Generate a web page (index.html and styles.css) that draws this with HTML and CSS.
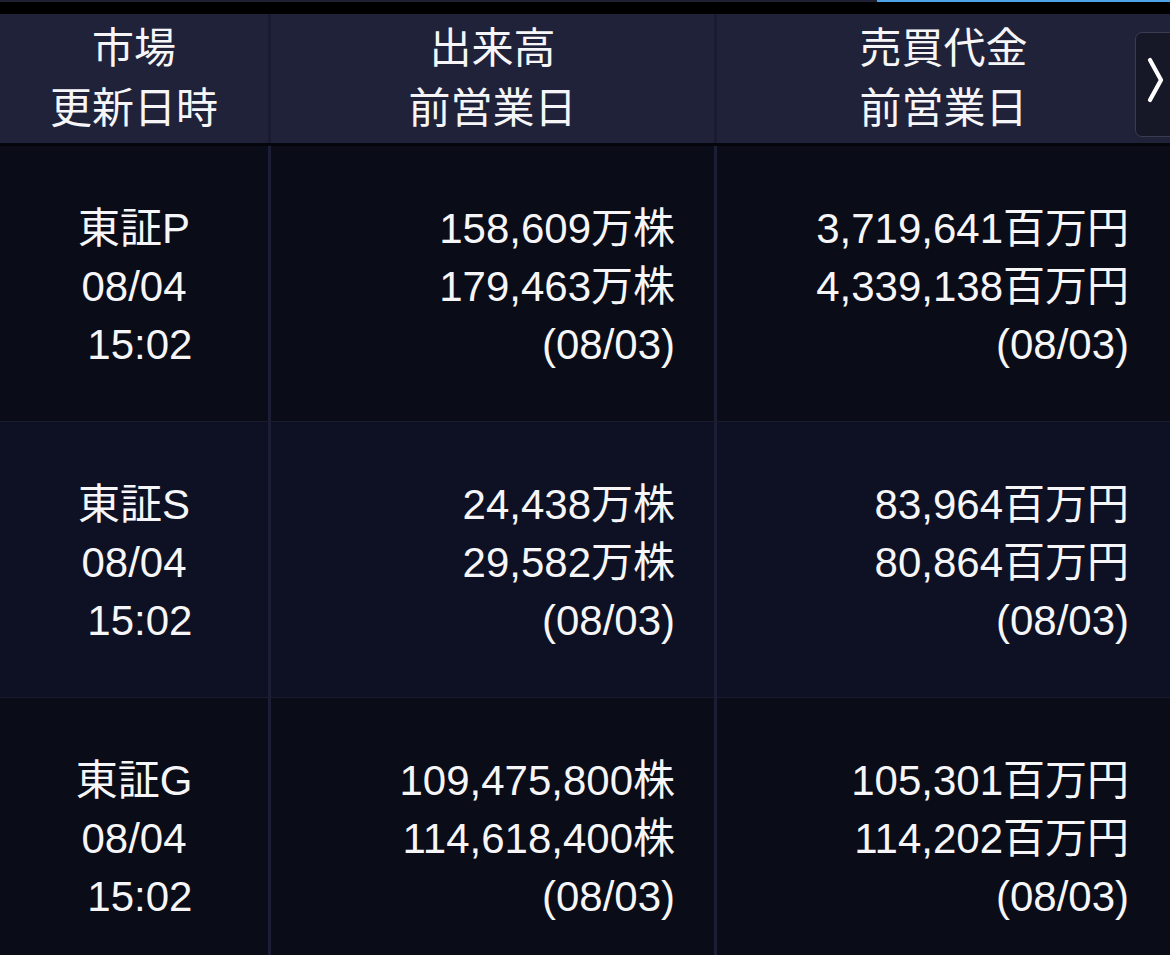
FILE: index.html
```html
<!DOCTYPE html>
<html lang="ja">
<head>
<meta charset="utf-8">
<link rel="stylesheet" href="styles.css">
</head>
<body>
<div class="topbar"><div class="topbar-fill"></div><div class="topbar-active"></div></div>
<div class="table">
  <div class="row head">
    <div class="cell c1 center"><div>市場</div><div>更新日時</div></div>
    <div class="cell c2 center"><div>出来高</div><div>前営業日</div></div>
    <div class="cell c3 center"><div>売買代金</div><div>前営業日</div></div>
  </div>
  <div class="row body odd">
    <div class="cell c1 center"><div>東証P</div><div>08/04</div><div>&nbsp;15:02</div></div>
    <div class="cell c2 right"><div>158,609万株</div><div>179,463万株</div><div>(08/03)</div></div>
    <div class="cell c3 right"><div>3,719,641百万円</div><div>4,339,138百万円</div><div>(08/03)</div></div>
  </div>
  <div class="row body even">
    <div class="cell c1 center"><div>東証S</div><div>08/04</div><div>&nbsp;15:02</div></div>
    <div class="cell c2 right"><div>24,438万株</div><div>29,582万株</div><div>(08/03)</div></div>
    <div class="cell c3 right"><div>83,964百万円</div><div>80,864百万円</div><div>(08/03)</div></div>
  </div>
  <div class="row body odd">
    <div class="cell c1 center"><div>東証G</div><div>08/04</div><div>&nbsp;15:02</div></div>
    <div class="cell c2 right"><div>109,475,800株</div><div>114,618,400株</div><div>(08/03)</div></div>
    <div class="cell c3 right"><div>105,301百万円</div><div>114,202百万円</div><div>(08/03)</div></div>
  </div>
</div>
<button class="next-btn" aria-label="next">
  <svg class="chev" width="18" height="48" viewBox="0 0 18 48"><path d="M4 4 L15 24 L4 44" fill="none" stroke="#ffffff" stroke-width="4.2" stroke-linecap="round" stroke-linejoin="round"/></svg>
</button>
</body>
</html>
```
FILE: styles.css
```css
html, body {
  margin: 0;
  padding: 0;
  background: #000000;
  width: 1170px;
  height: 955px;
  overflow: hidden;
  font-family: "Liberation Sans", "Noto Sans CJK JP", sans-serif;
  color: #f6f6f8;
}
.topbar {
  display: flex;
  height: 2px;
  margin-bottom: 12px;
}
.topbar-fill { width: 877px; background: #1f2032; }
.topbar-active { flex: 1; background: #4da3e6; }
.table {
  display: flex;
  flex-direction: column;
}
.row {
  display: flex;
}
.head {
  height: 129px;
  background: #20223a;
  border-bottom: 3px solid #05060c;
  font-size: 42px;
  line-height: 60px;
}
.head .cell { border-right-color: #1a1b30; }
.body {
  height: 275px;
  font-size: 42px;
  line-height: 58px;
  border-bottom: 1px solid #191b2e;
}
.odd { background: #0a0c18; }
.even { background: #0e1123; }
.cell {
  display: flex;
  flex-direction: column;
  justify-content: center;
  box-sizing: border-box;
  white-space: nowrap;
}
.body .cell { padding-top: 6px; }
.c1 { width: 271px; border-right: 3px solid #1c1e35; }
.c2 { width: 446px; border-right: 3px solid #1c1e35; padding-right: 39px; }
.c3 { flex: 1; padding-right: 41px; }
.head .c2, .head .c3 { padding-right: 0; }
.center { align-items: center; text-align: center; }
.right { align-items: flex-end; text-align: right; }
.next-btn {
  position: absolute;
  top: 32px;
  left: 1135px;
  width: 48px;
  height: 105px;
  box-sizing: border-box;
  background: #171827;
  border: 1px solid #3a3c52;
  border-radius: 7px;
  padding: 23px 0 0 10px;
  display: flex;
  align-items: flex-start;
  justify-content: flex-start;
}
.chev { display: block; }
```
